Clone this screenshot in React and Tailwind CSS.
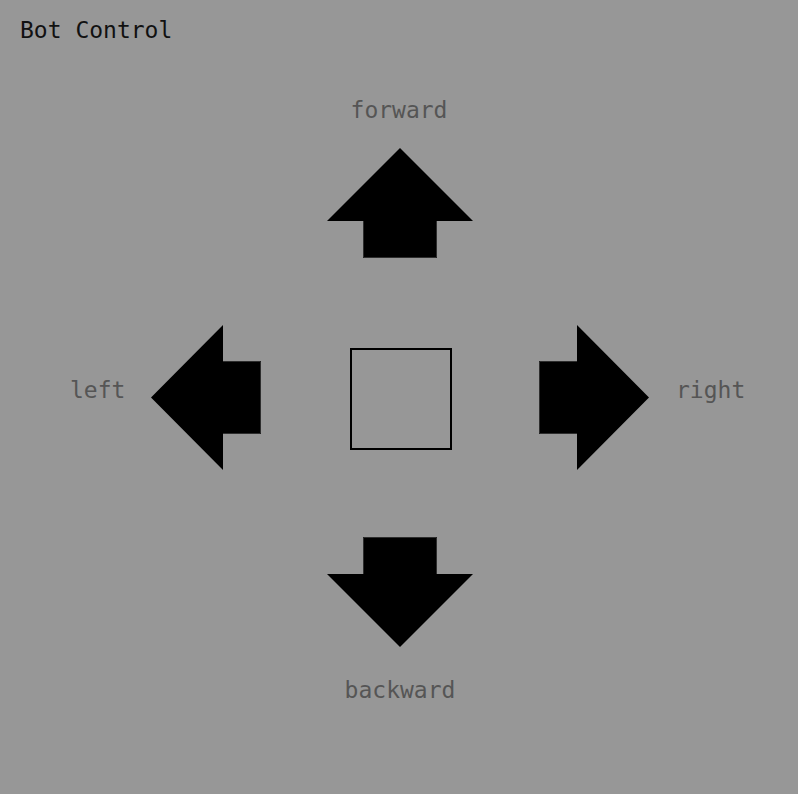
import React from "react";

const mono = { fontFamily: '"DejaVu Sans Mono", "Liberation Mono", monospace' };

// arrow shapes, drawn as one polygon each
function UpArrow() {
  return (
    <svg width="146" height="110" viewBox="0 0 146 110" className="block">
      <polygon points="73,0 146,73 110,73 110,110 36,110 36,73 0,73" fill="#000" />
      <path d="M36.5,73 V109.5 H109.5 V73" fill="none" stroke="#2e2e2e" strokeWidth="1" />
    </svg>
  );
}

function DownArrow() {
  return (
    <svg width="146" height="110" viewBox="0 0 146 110" className="block">
      <polygon points="36,0 110,0 110,37 146,37 73,110 0,37 36,37" fill="#000" />
      <path d="M36.5,37 V0.5 H109.5 V37" fill="none" stroke="#2e2e2e" strokeWidth="1" />
    </svg>
  );
}

function LeftArrow() {
  return (
    <svg width="110" height="145" viewBox="0 0 110 145" className="block">
      <polygon points="0,72.5 72,0 72,36 110,36 110,109 72,109 72,145" fill="#000" />
      <path d="M72,36.5 H109.5 V108.5 H72" fill="none" stroke="#2e2e2e" strokeWidth="1" />
    </svg>
  );
}

function RightArrow() {
  return (
    <svg width="110" height="145" viewBox="0 0 110 145" className="block">
      <polygon points="38,0 110,72.5 38,145 38,109 0,109 0,36 38,36" fill="#000" />
      <path d="M38,36.5 H0.5 V108.5 H38" fill="none" stroke="#2e2e2e" strokeWidth="1" />
    </svg>
  );
}

export default function App() {
  return (
    <div className="w-[798px] h-[794px] bg-[#979797] overflow-hidden" style={mono}>
      <div className="pl-5 pt-[19px] text-[23px] leading-[23px] text-[#111]">Bot Control</div>

      <div className="flex flex-col items-start text-[23px] leading-[23px] text-[#555]">
        <div className="mt-[57px] w-[798px] text-center">forward</div>
        <div className="mt-[26px] ml-[327px]">
          <UpArrow />
        </div>

        <div className="mt-[67px] flex items-start pl-[70px]">
          <div className="w-[81px] mt-[54px]">left</div>
          <LeftArrow />
          <div className="ml-[89px] mt-[23px] w-[102px] h-[102px] border-2 border-black" />
          <div className="ml-[87px]">
            <RightArrow />
          </div>
          <div className="ml-[27px] mt-[54px]">right</div>
        </div>

        <div className="mt-[67px] ml-[327px]">
          <DownArrow />
        </div>
        <div className="mt-[32px] w-[798px] text-center pl-[2px]">backward</div>
      </div>
    </div>
  );
}
